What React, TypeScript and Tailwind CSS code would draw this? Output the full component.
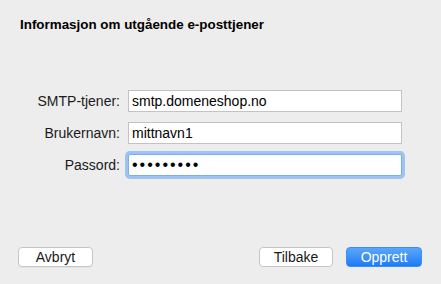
const fields = [
  { label: 'SMTP-tjener:', value: 'smtp.domeneshop.no' },
  { label: 'Brukernavn:', value: 'mittnavn1' },
]

const App = () => {
  return (
    <div
      className="w-[441px] h-[284px] bg-[#ededed] flex flex-col text-[#1a1a1a] text-[14px] px-[18px] pt-[17px] pb-[17px]"
      style={{ fontFamily: '"Liberation Sans", Arial, sans-serif' }}
    >
      <h1 className="font-bold text-[13.4px] leading-[16px] pl-[2px] text-black">
        Informasjon om utgående e-posttjener
      </h1>

      <div className="mt-[57px] flex flex-col gap-[10px]">
        {fields.map((f) => (
          <div key={f.label} className="flex items-center h-[22px]">
            <span className="w-[102px] text-right leading-[16px]">{f.label}</span>
            <div className="ml-[8px] w-[274px] h-[22px] bg-white border border-[#c3c3c3] flex items-center pl-[3px] leading-[16px] text-black">
              {f.value}
            </div>
          </div>
        ))}
        <div className="flex items-center h-[22px]">
          <span className="w-[102px] text-right leading-[16px]">Passord:</span>
          <div className="ml-[8px] w-[274px] h-[22px] bg-white border border-[#7eaee8] rounded-[2px] shadow-[0_0_0_3px_#9cc3f2] flex items-center pl-[3px] text-black">
            <span className="text-[16px] leading-[16px] tracking-[2px]">•••••••••</span>
          </div>
        </div>
      </div>

      <div className="mt-auto flex items-center">
        <button className="w-[75px] h-[20px] bg-white border border-[#c6c6c6] rounded-[4px] text-[14px] leading-[16px] text-[#1a1a1a] shadow-[0_1px_0_rgba(0,0,0,0.04)]">
          Avbryt
        </button>
        <div className="ml-auto flex gap-[13px] pr-[1px]">
          <button className="w-[74px] h-[20px] bg-white border border-[#c6c6c6] rounded-[4px] text-[14px] leading-[16px] text-[#1a1a1a]">
            Tilbake
          </button>
          <button className="w-[76px] h-[20px] rounded-[4px] bg-gradient-to-b from-[#5aa6fb] to-[#1b7cf5] border border-[#3a8ef6] text-[14px] leading-[16px] text-white">
            Opprett
          </button>
        </div>
      </div>
    </div>
  )
}

export default App
